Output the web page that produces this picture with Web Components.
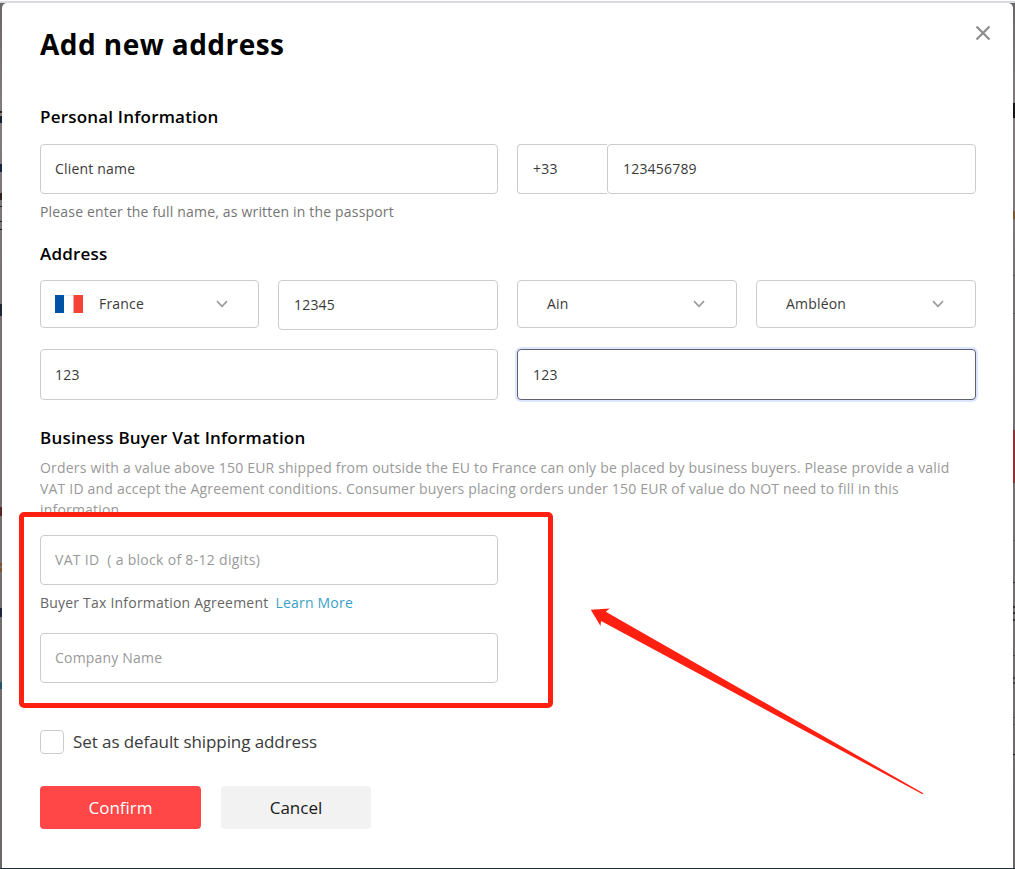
<!DOCTYPE html>
<html lang="en">
<head>
<meta charset="utf-8">
<title>Add new address</title>
<style>
html,body{margin:0;height:100%;overflow:hidden}
body{font-family:"Open Sans","Noto Sans",sans-serif;font-size:14px;letter-spacing:.193px;color:#3a3a3a;background:#fff}
</style>
</head>
<body>
<address-page></address-page>
<script>
const define = (name, html, setup) => {
  const t = document.createElement('template');
  t.innerHTML = html;
  customElements.define(name, class extends HTMLElement {
    constructor() {
      super();
      this.attachShadow({mode: 'open'}).append(t.content.cloneNode(true));
    }
    connectedCallback() { if (setup) setup(this, this.shadowRoot); }
  });
};

define('text-field', `
<style>
:host{display:flex;align-items:center;box-sizing:border-box;height:50px;border:1px solid #ccc;border-radius:4px;padding:0 14px;line-height:20px;background:#fff;color:#3a3a3a;white-space:pre}
:host([placeholder]){color:#999}
:host([tall]){height:51px;padding-top:1px}
:host([focused]){border-color:#60616c;box-shadow:0 0 0 2px #dce6ff;padding-left:15px}
:host([code]){border-right:0;border-radius:4px 0 0 4px;padding-left:15px}
:host([indent]){padding-left:15px}
</style><slot></slot>`);

define('select-field', `
<style>
:host{display:flex;align-items:center;box-sizing:border-box;height:48px;border:1px solid #ccc;border-radius:4px;padding:0 30px 0 29px;background:#fff}
:host([flagged]){padding:0 29px 0 14px}
.v{flex:1;line-height:20px}
::slotted(french-flag){margin-right:16px}
svg{display:block}
</style><slot name="icon"></slot><span class="v"><slot></slot></span>
<svg width="14" height="9" viewBox="0 0 14 9"><path d="M2 1.100 7 6.400 12 1.100" fill="none" stroke="#999" stroke-width="1.600"/></svg>`);

define('french-flag', `
<style>
:host{display:block;width:28px;height:18px}
svg{display:block}
</style><svg width="28" height="18"><path fill="#eee" d="M0 0h28v18H0z"/><path fill="#fff" d="M9 1h10v17H9z"/><path fill="#0052a5" d="M0 0h9v18H0z"/><path fill="#f44336" d="M18.500 0H28v18h-9.500z"/></svg>`);

define('section-title', `
<style>:host{display:block;font-size:17px;line-height:22px;font-weight:600;color:#000;letter-spacing:.2px}</style><slot></slot>`);

define('action-button', `
<style>
:host{display:flex;align-items:center;justify-content:center;height:43px;width:150px;border-radius:4px;background:#f2f2f2;color:#191919;font-size:17px;letter-spacing:0}
:host([primary]){width:161px;background:#ff4747;color:#fff}
</style><slot></slot>`);

define('check-option', `
<style>
:host{display:flex;align-items:center;gap:9px;font-size:17px;line-height:24px;letter-spacing:-.08px}
i{box-sizing:border-box;width:24px;height:24px;border:1px solid #ccc;border-radius:4px}
</style><i></i><span><slot></slot></span>`);

define('close-button', `
<style>:host{display:block;width:16px;height:16px}svg{display:block}</style>
<svg width="16" height="16"><path d="M1.500 1.500l13 13M14.500 1.500l-13 13" stroke="#8c8c8c" stroke-width="2.200" fill="none"/></svg>`);

define('page-edge', `
<style>:host{display:block;position:relative;width:2px;background:linear-gradient(#6b6667,#837b7d 12%,#777072 35%,#746e70 70%,#6b6668);overflow:hidden}
i{position:absolute;left:0;width:2px}</style>`,
(el, root) => {
  for (const s of el.getAttribute('marks').split(';')) {
    const [y, h, c] = s.split(',');
    const i = document.createElement('i');
    i.style.cssText = 'top:' + (y - 3) + 'px;height:' + h + 'px;background:' + c;
    root.append(i);
  }
});

define('callout-marks', `
<style>:host{position:absolute;left:0;top:0;pointer-events:none}svg{display:block}</style>
<svg width="1015" height="869">
<rect x="21.500" y="514.500" width="529" height="191" rx="2.500" fill="none" stroke="#ff2012" stroke-width="5"/>
<path fill="#ff2012" d="M590.800 609.700 609.800 608.400 605.800 611.800 923.300 793.200 922.500 794.200 601 621 600.500 626z"/>
</svg>`);

define('address-form', `
<style>
:host{display:block;box-sizing:border-box;background:#fff;border-radius:5px 5px 0 0;padding:22px 37px 0 38px;height:865px}
header{display:flex;justify-content:space-between;height:81px}
h1{margin:-1px 0 0;font-size:28px;line-height:40px;font-weight:700;color:#000;letter-spacing:.45px}
close-button{margin:0 -15px 0 0}
.row{display:grid;grid-template-columns:458px 459px;column-gap:19px;margin-top:16px}
.four{grid-template-columns:219px 220px 220px 220px;align-items:start;margin-top:15px}
.phone{display:grid;grid-template-columns:90px 369px}
.hint{line-height:20px;margin:8px 0 21px;color:#757575;letter-spacing:.175px}
.lines{margin-top:19px;margin-bottom:27px}
.note{line-height:21px;margin:8px 0 0;color:#999;white-space:nowrap}
.vat{margin-top:15px;width:458px;letter-spacing:.3px}
.agree{line-height:20px;margin:8px 0 20px;color:#666;white-space:pre;letter-spacing:.21px}
.agree a{color:#3a9fc5;margin-left:7px}
.company{width:458px}
check-option{margin-top:47px}
footer{display:flex;gap:20px;margin-top:32px}
</style>
<header><h1>Add new address</h1><close-button></close-button></header>
<section-title>Personal Information</section-title>
<div class="row"><text-field>Client name</text-field><div class="phone"><text-field code>+33</text-field><text-field indent>123456789</text-field></div></div>
<p class="hint">Please enter the full name, as written in the passport</p>
<section-title>Address</section-title>
<div class="row four"><select-field flagged><french-flag slot="icon"></french-flag>France</select-field><text-field indent>12345</text-field><select-field>Ain</select-field><select-field>Ambléon</select-field></div>
<div class="row lines"><text-field tall>123</text-field><text-field tall focused>123</text-field></div>
<section-title>Business Buyer Vat Information</section-title>
<p class="note">Orders with a value above 150 EUR shipped from outside the EU to France can only be placed by business buyers. Please provide a valid<br>VAT ID and accept the Agreement conditions. Consumer buyers placing orders under 150 EUR of value do NOT need to fill in this<br>information.</p>
<text-field class="vat" placeholder>VAT ID  ( a block of 8-12 digits)</text-field>
<div class="agree">Buyer Tax Information Agreement<a>Learn More</a></div>
<text-field class="company" placeholder>Company Name</text-field>
<check-option>Set as default shipping address</check-option>
<footer><action-button primary>Confirm</action-button><action-button>Cancel</action-button></footer>`);

define('address-page', `
<style>
:host{display:block;position:relative;width:1015px;height:869px;overflow:hidden}
.top{height:2px;border-top:1px solid #fff;background:#dadbe1}
.body{display:grid;grid-template-columns:2px 1011px 2px;height:865px;background:linear-gradient(#6b6667,#837b7d)}
.end{height:1px;background:#20303a}
</style>
<div class="top"></div>
<div class="body">
<page-edge marks="111,2,#222;116,7,#19202f;164,8,#17254a;193,7,#34211f;206,1,#222;221,1,#222;229,1,#111;304,12,#202737;507,9,#5a2528;563,3,#82542d;568,4,#82542d;608,9,#1c2540;682,7,#24566c"></page-edge>
<address-form></address-form>
<page-edge marks="103,15,#161415;211,8,#80592b;275,1,#555;313,1,#555;430,53,#8f3034;540,1,#555;582,1,#333;606,2,#333;612,2,#333;619,2,#333;655,1,#444;677,2,#444;682,2,#444;717,1,#555;724,1,#555;754,1,#222"></page-edge>
</div>
<div class="end"></div>
<callout-marks></callout-marks>`);
</script>
</body>
</html>
